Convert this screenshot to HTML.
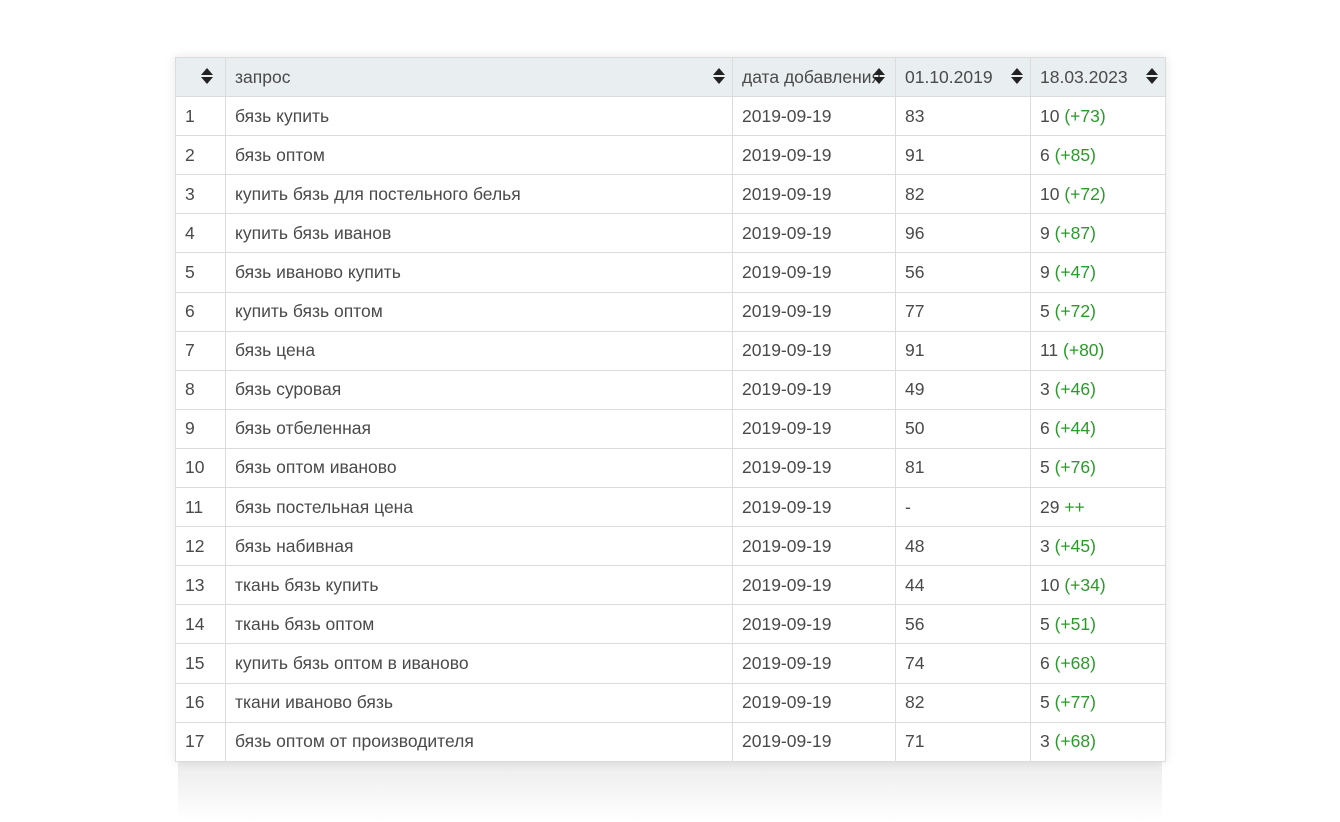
<!DOCTYPE html>
<html><head><meta charset="utf-8"><style>
body{margin:0;width:1340px;height:822px;background:#fff;font-family:"Liberation Sans",Arial,sans-serif;overflow:hidden;position:relative}
.shadow{position:absolute;left:178px;top:762px;width:984px;height:60px;background:linear-gradient(#ececec,#f8f8f8 60%,#fff);}
table{position:absolute;left:175px;top:57px;border-collapse:collapse;table-layout:fixed;width:990px;font-size:17.5px;color:#4a4a4a;box-shadow:0 0 10px rgba(0,0,0,.1)}
tr{height:39.1px}
td,th{border:1.5px solid #dcdcdc;padding:0 0 0 9px;text-align:left;font-weight:normal;white-space:nowrap;overflow:hidden}
th{background:#e9eef0;position:relative}
.s{position:absolute;right:7px;top:10px;width:12px;color:#222}
.s:before{content:"";display:block;width:0;height:0;border-left:6px solid transparent;border-right:6px solid transparent;border-bottom:7px solid #222;margin-bottom:2px}
.s:after{content:"";display:block;width:0;height:0;border-left:6px solid transparent;border-right:6px solid transparent;border-top:7px solid #222}
.g{color:#2a9a2a}
</style></head><body>
<div class="shadow"></div>
<table>
<colgroup><col style="width:50px"><col style="width:507px"><col style="width:163px"><col style="width:135px"><col style="width:135px"></colgroup>
<tr><th><span class="s" style="right:12px"></span></th><th>запрос<span class="s"></span></th><th>дата добавления<span class="s" style="right:10px"></span></th><th>01.10.2019 <span class="s"></span></th><th>18.03.2023 <span class="s"></span></th></tr>
<tr><td>1</td><td>бязь купить</td><td>2019-09-19</td><td>83</td><td>10 <span class="g">(+73)</span></td></tr>
<tr><td>2</td><td>бязь оптом</td><td>2019-09-19</td><td>91</td><td>6 <span class="g">(+85)</span></td></tr>
<tr><td>3</td><td>купить бязь для постельного белья</td><td>2019-09-19</td><td>82</td><td>10 <span class="g">(+72)</span></td></tr>
<tr><td>4</td><td>купить бязь иванов</td><td>2019-09-19</td><td>96</td><td>9 <span class="g">(+87)</span></td></tr>
<tr><td>5</td><td>бязь иваново купить</td><td>2019-09-19</td><td>56</td><td>9 <span class="g">(+47)</span></td></tr>
<tr><td>6</td><td>купить бязь оптом</td><td>2019-09-19</td><td>77</td><td>5 <span class="g">(+72)</span></td></tr>
<tr><td>7</td><td>бязь цена</td><td>2019-09-19</td><td>91</td><td>11 <span class="g">(+80)</span></td></tr>
<tr><td>8</td><td>бязь суровая</td><td>2019-09-19</td><td>49</td><td>3 <span class="g">(+46)</span></td></tr>
<tr><td>9</td><td>бязь отбеленная</td><td>2019-09-19</td><td>50</td><td>6 <span class="g">(+44)</span></td></tr>
<tr><td>10</td><td>бязь оптом иваново</td><td>2019-09-19</td><td>81</td><td>5 <span class="g">(+76)</span></td></tr>
<tr><td>11</td><td>бязь постельная цена</td><td>2019-09-19</td><td>-</td><td>29 <span class="g">++</span></td></tr>
<tr><td>12</td><td>бязь набивная</td><td>2019-09-19</td><td>48</td><td>3 <span class="g">(+45)</span></td></tr>
<tr><td>13</td><td>ткань бязь купить</td><td>2019-09-19</td><td>44</td><td>10 <span class="g">(+34)</span></td></tr>
<tr><td>14</td><td>ткань бязь оптом</td><td>2019-09-19</td><td>56</td><td>5 <span class="g">(+51)</span></td></tr>
<tr><td>15</td><td>купить бязь оптом в иваново</td><td>2019-09-19</td><td>74</td><td>6 <span class="g">(+68)</span></td></tr>
<tr><td>16</td><td>ткани иваново бязь</td><td>2019-09-19</td><td>82</td><td>5 <span class="g">(+77)</span></td></tr>
<tr><td>17</td><td>бязь оптом от производителя</td><td>2019-09-19</td><td>71</td><td>3 <span class="g">(+68)</span></td></tr>
</table>
</body></html>
